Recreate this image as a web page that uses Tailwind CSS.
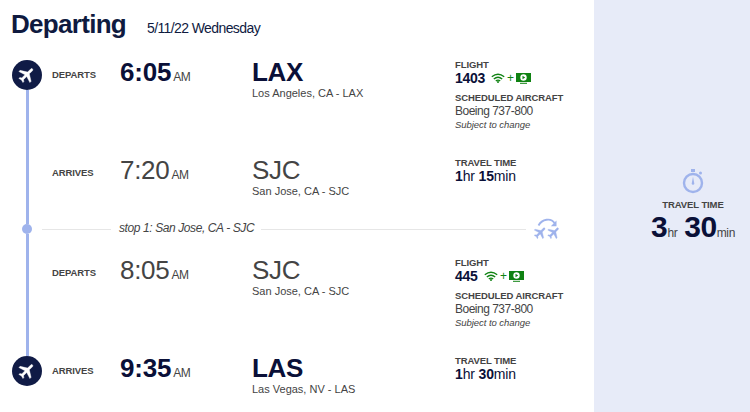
<!DOCTYPE html>
<html lang="en">

<head>
    <meta charset="UTF-8">
    <meta name="viewport" content="width=device-width, initial-scale=1.0">
    <title>Departing flight</title>
    <script src="https://cdn.jsdelivr.net/npm/@tailwindcss/browser@4"></script>
</head>

<body class="bg-white font-['Liberation_Sans',Arial,sans-serif] text-[#444] overflow-hidden">

    <!-- shared icons -->
    <svg class="hidden">
        <symbol id="plane" viewBox="1 1 22 22">
            <path transform="rotate(45 12 12)" d="M21 16v-2l-8-5V3.500c0-.83-.67-1.500-1.500-1.500S10 2.670 10 3.500V9l-8 5v2l8-2.500V19l-2 1.500V22l3.500-1 3.500 1v-1.500L13 19v-5.500l8 2.500z" fill="currentColor" stroke="currentColor" stroke-width="0.500" stroke-linejoin="round" />
        </symbol>
        <symbol id="wifi" viewBox="0 0 14 10">
            <path d="M.8 3.800Q7-1.400 13.200 3.800M2.800 6Q7 2.500 11.200 6M4.800 8Q7 6.200 9.200 8" fill="none" stroke="currentColor" stroke-width="1.400" />
            <circle cx="7" cy="9" r="1" fill="currentColor" />
        </symbol>
        <symbol id="tv" viewBox="0 0 15 11">
            <path d="M0 0h15v9H0z" fill="currentColor" />
            <path d="M4 10.300h7" stroke="currentColor" stroke-width="1" />
            <circle cx="7.500" cy="4.500" r="3.200" fill="#fff" />
            <path d="M6.500 2.700v3.600l2.700-1.800z" fill="currentColor" />
        </symbol>
    </svg>

    <div class="flex h-[412px]">
        <main class="w-[594px] flex flex-col">
            <header class="h-[54px] flex items-baseline pt-[9px] pl-[11px] text-[#0f1a3f]">
                <h1 class="text-[26px] leading-[30px] font-bold w-[136px] tracking-[-0.7px]">Departing</h1>
                <p class="text-[14px] tracking-[-0.6px]">5/11/22 Wednesday</p>
            </header>

            <div class="flex flex-1">
                <!-- timeline -->
                <div class="w-[30px] ml-3 pt-[6px] flex flex-col items-center">
                    <div class="size-[30px] rounded-full bg-[#101b46] text-white flex items-center justify-center">
                        <svg class="size-[18px]"><use href="#plane" /></svg>
                    </div>
                    <div class="w-[3px] h-[134px] bg-[#9fb3ec]"></div>
                    <div class="size-[10px] rounded-full bg-[#9fb3ec]"></div>
                    <div class="w-[3px] h-[122px] bg-[#9fb3ec]"></div>
                    <div class="size-[30px] rounded-full bg-[#101b46] text-white flex items-center justify-center">
                        <svg class="size-[18px]"><use href="#plane" /></svg>
                    </div>
                </div>

                <div class="flex-1">
                    <section class="h-[98px] grid grid-cols-[68px_132px_203px_1fr] pl-[10px]">
                        <p class="pt-[15px] text-[9.500px] leading-3 font-bold tracking-[-0.1px]">DEPARTS</p>
                        <p class="pt-[3px] text-[26px] leading-[30px] font-bold text-[#0a1038] tracking-[-0.2px]">6:05<span class="text-[12px] font-normal text-[#444] ml-[2px] tracking-[-0.5px]">AM</span></p>
                        <div class="pt-[3px]">
                            <p class="text-[26px] leading-[30px] font-bold text-[#0a1038] tracking-[-0.3px]">LAX</p>
                            <p class="text-[11px] leading-3">Los Angeles, CA - LAX</p>
                        </div>
                        <div class="pt-[5px]">
                            <p class="text-[9.500px] leading-3 font-bold tracking-[-0.1px]">FLIGHT</p>
                            <div class="flex items-center text-[#0f8212] h-[14px]">
                                <span class="text-[14px] font-bold text-[#0a1038] w-[36px] tracking-[-0.3px]">1403</span>
                                <svg class="w-[14px] h-[10px]"><use href="#wifi" /></svg>
                                <span class="text-[12px] w-[11px] text-center">+</span>
                                <svg class="w-[15px] h-[11px]"><use href="#tv" /></svg>
                            </div>
                            <p class="text-[9.500px] leading-3 font-bold mt-[7px] tracking-[-0.1px] whitespace-nowrap">SCHEDULED AIRCRAFT</p>
                            <p class="text-[12px] leading-[14px] tracking-[-0.5px]">Boeing 737-800</p>
                            <p class="text-[9.500px] leading-[14px] italic tracking-[-0.05px]">Subject to change</p>
                        </div>
                    </section>

                    <section class="h-[60px] grid grid-cols-[68px_132px_203px_1fr] pl-[10px]">
                        <p class="pt-[15px] text-[9.500px] leading-3 font-bold tracking-[-0.1px]">ARRIVES</p>
                        <p class="pt-[3px] text-[26px] leading-[30px] tracking-[-0.3px]">7:20<span class="text-[12px] ml-[2px] tracking-[-0.5px]">AM</span></p>
                        <div class="pt-[3px]">
                            <p class="text-[26px] leading-[30px] tracking-[-0.3px]">SJC</p>
                            <p class="text-[11px] leading-3">San Jose, CA - SJC</p>
                        </div>
                        <div class="pt-[5px]">
                            <p class="text-[9.500px] leading-3 font-bold tracking-[-0.1px]">TRAVEL TIME</p>
                            <p class="text-[14px] leading-[14px] text-[#0a1038] tracking-[-0.15px]"><b>1</b>hr <b>15</b>min</p>
                        </div>
                    </section>

                    <div class="h-[34px] mb-[6px] flex items-center">
                        <div class="w-[69px] h-px bg-[#e6e6e6]"></div>
                        <p class="w-[150px] pl-[8px] pb-[2px] text-[12px] italic whitespace-nowrap tracking-[-0.4px]">stop 1: San Jose, CA - SJC</p>
                        <div class="w-[265px] h-px bg-[#e6e6e6]"></div>
                        <svg class="ml-[7px] w-[28px] h-[22px] text-[#9fb3ec]" viewBox="0 0 28 22">
                            <path d="M5.500 7.500C9 1 18-.5 21.500 5" fill="none" stroke="currentColor" stroke-width="1.900" />
                            <path d="M23.500 2.500v5.700h-5.700z" fill="currentColor" />
                            <use href="#plane" x="0.500" y="7.800" width="14" height="14" />
                            <use href="#plane" x="14" y="7.800" width="14" height="14" />
                        </svg>
                    </div>

                    <section class="h-[98px] grid grid-cols-[68px_132px_203px_1fr] pl-[10px]">
                        <p class="pt-[15px] text-[9.500px] leading-3 font-bold tracking-[-0.1px]">DEPARTS</p>
                        <p class="pt-[3px] text-[26px] leading-[30px] tracking-[-0.3px]">8:05<span class="text-[12px] ml-[2px] tracking-[-0.5px]">AM</span></p>
                        <div class="pt-[3px]">
                            <p class="text-[26px] leading-[30px] tracking-[-0.3px]">SJC</p>
                            <p class="text-[11px] leading-3">San Jose, CA - SJC</p>
                        </div>
                        <div class="pt-[5px]">
                            <p class="text-[9.500px] leading-3 font-bold tracking-[-0.1px]">FLIGHT</p>
                            <div class="flex items-center text-[#0f8212] h-[14px]">
                                <span class="text-[14px] font-bold text-[#0a1038] w-[29px] tracking-[-0.3px]">445</span>
                                <svg class="w-[14px] h-[10px]"><use href="#wifi" /></svg>
                                <span class="text-[12px] w-[11px] text-center">+</span>
                                <svg class="w-[15px] h-[11px]"><use href="#tv" /></svg>
                            </div>
                            <p class="text-[9.500px] leading-3 font-bold mt-[7px] tracking-[-0.1px] whitespace-nowrap">SCHEDULED AIRCRAFT</p>
                            <p class="text-[12px] leading-[14px] tracking-[-0.5px]">Boeing 737-800</p>
                            <p class="text-[9.500px] leading-[14px] italic tracking-[-0.05px]">Subject to change</p>
                        </div>
                    </section>

                    <section class="h-[60px] grid grid-cols-[68px_132px_203px_1fr] pl-[10px]">
                        <p class="pt-[15px] text-[9.500px] leading-3 font-bold tracking-[-0.1px]">ARRIVES</p>
                        <p class="pt-[3px] text-[26px] leading-[30px] font-bold text-[#0a1038] tracking-[-0.2px]">9:35<span class="text-[12px] font-normal text-[#444] ml-[2px] tracking-[-0.5px]">AM</span></p>
                        <div class="pt-[3px]">
                            <p class="text-[26px] leading-[30px] font-bold text-[#0a1038] tracking-[-0.3px]">LAS</p>
                            <p class="text-[11px] leading-3">Las Vegas, NV - LAS</p>
                        </div>
                        <div class="pt-[5px]">
                            <p class="text-[9.500px] leading-3 font-bold tracking-[-0.1px]">TRAVEL TIME</p>
                            <p class="text-[14px] leading-[14px] text-[#0a1038] tracking-[-0.15px]"><b>1</b>hr <b>30</b>min</p>
                        </div>
                    </section>
                </div>
            </div>
        </main>

        <!-- total travel time -->
        <aside class="w-[156px] bg-[#e7ebf8] flex flex-col items-center pt-[168px] pl-[42px]">
            <svg class="w-[22px] h-[26px] text-[#9fb3ec]" viewBox="0 0 22 26">
                <circle cx="11" cy="15" r="9" fill="none" stroke="currentColor" stroke-width="2.400" />
                <path d="M9 1h4v3H9z" fill="currentColor" />
                <circle cx="18.500" cy="5" r="1.500" fill="currentColor" />
                <path d="M11 8.500l1.300 7a1.300 1.300 0 0 1-2.600 0z" fill="currentColor" />
            </svg>
            <p class="mt-[5px] text-[9.500px] leading-3 font-bold tracking-[-0.1px]">TRAVEL TIME</p>
            <p class="text-[12px] leading-[32px] whitespace-nowrap tracking-[-0.4px]"><b class="text-[30px] text-[#0a1038]">3</b>hr <b class="text-[30px] text-[#0a1038] ml-1">30</b>min</p>
        </aside>
    </div>

</body>

</html>
